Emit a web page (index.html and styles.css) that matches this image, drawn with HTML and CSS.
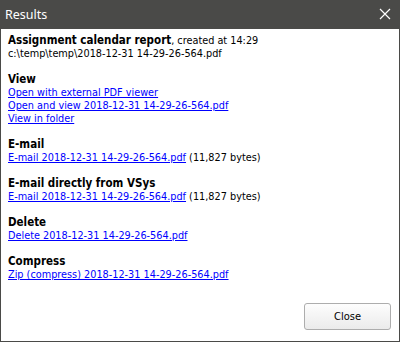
FILE: index.html
```html
<!DOCTYPE html>
<html lang="en">
  <head>
    <meta charset="UTF-8" />
    <title>Results</title>
    <link rel="stylesheet" href="styles.css">
  </head>
  <body>
    <div class="dialog">
      <div class="titlebar">
        <span class="title">Results</span>
        <svg class="close-x" width="12" height="12" viewBox="0 0 12 12">
          <path d="M1 1 L11 11 M11 1 L1 11" stroke="#fff" stroke-width="1.2" fill="none" />
        </svg>
      </div>

      <div class="content">
        <p class="intro">
          <b>Assignment calendar report</b>, created at 14:29<br />
          c:\temp\temp\2018-12-31 14-29-26-564.pdf
        </p>

        <div class="section">
          <h2>View</h2>
          <a href="#">Open with external PDF viewer</a>
          <a href="#">Open and view 2018-12-31 14-29-26-564.pdf</a>
          <a href="#">View in folder</a>
        </div>

        <div class="section">
          <h2>E-mail</h2>
          <div><a href="#">E-mail 2018-12-31 14-29-26-564.pdf</a> (11,827 bytes)</div>
        </div>

        <div class="section">
          <h2>E-mail directly from VSys</h2>
          <div><a href="#">E-mail 2018-12-31 14-29-26-564.pdf</a> (11,827 bytes)</div>
        </div>

        <div class="section">
          <h2>Delete</h2>
          <a href="#">Delete 2018-12-31 14-29-26-564.pdf</a>
        </div>

        <div class="section">
          <h2>Compress</h2>
          <a href="#">Zip (compress) 2018-12-31 14-29-26-564.pdf</a>
        </div>
      </div>

      <div class="footer">
        <button class="btn">Close</button>
      </div>
    </div>
  </body>
</html>
```

FILE: styles.css
```css
html,
body {
  margin: 0;
  padding: 0;
}
body {
  width: 400px;
  height: 342px;
  font-family: "DejaVu Sans Condensed", "DejaVu Sans", sans-serif;
  font-size: 10.8px;
  color: #000;
}
.dialog {
  box-sizing: border-box;
  width: 400px;
  height: 342px;
  border: 1px solid #4a4a48;
  border-top: none;
  display: flex;
  flex-direction: column;
  background-color: #fff;
}
.titlebar {
  height: 28px;
  margin: 0 -1px;
  background-color: #4a4a48;
  color: #fff;
  display: flex;
  align-items: center;
  justify-content: space-between;
  padding: 0 9px 1px 5px;
  font-family: "Noto Sans", sans-serif;
  font-size: 12.5px;
}
.close-x {
  display: block;
}
.content {
  flex: 1;
  padding: 5px 7px 0;
  line-height: 13px;
}
.intro {
  margin: 0 0 1px;
}
.intro b,
h2 {
  font-size: 11.5px;
  font-weight: bold;
}
h2 {
  margin: 0;
  line-height: 13px;
}
.section {
  margin-top: 13px;
}
.section a {
  display: block;
}
.section div a {
  display: inline;
}
a {
  color: #0000ff;
  text-decoration: underline;
}
.footer {
  display: flex;
  justify-content: flex-end;
  padding: 0 8px 11px;
}
.btn {
  width: 87px;
  height: 27px;
  border: 1px solid #adadad;
  border-radius: 3px;
  background: linear-gradient(#fdfdfd, #ebebeb);
  font-family: "DejaVu Sans Condensed", "DejaVu Sans", sans-serif;
  font-size: 11px;
  color: #000;
}
```
